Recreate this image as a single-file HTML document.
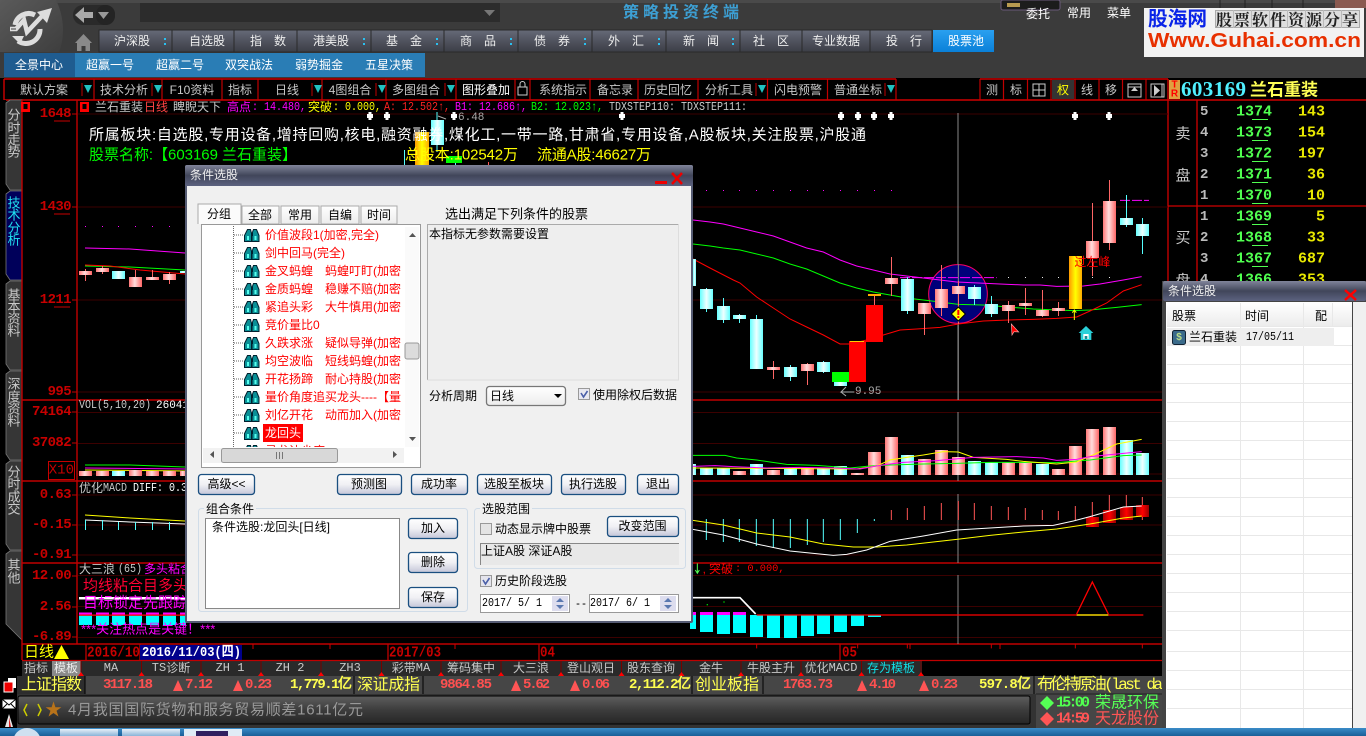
<!DOCTYPE html>
<html lang="zh-CN"><head><meta charset="utf-8"><title>策略投资终端</title>
<style>
html,body{margin:0;padding:0;background:#000;width:1366px;height:736px;overflow:hidden}
svg{display:block}
text{font-family:"Liberation Sans","WenQuanYi Zen Hei","Noto Sans CJK SC",sans-serif;font-size:12px;dominant-baseline:central;white-space:pre}
.m{text-anchor:middle}.e{text-anchor:end}
.n{font-family:"Liberation Mono","WenQuanYi Zen Hei","Noto Sans CJK SC",monospace}
.ax{font-family:"Liberation Mono",monospace;font-weight:bold;font-size:14px;letter-spacing:-.6px;fill:#c80000;text-anchor:end}
.b{font-weight:bold}
.w{fill:#fff}.g{fill:#c8c8c8}.k{fill:#000}.r{fill:#f00}
.dl{stroke:#3c0000;stroke-width:1}
.rl{stroke:#c00000;stroke-width:1.4}
.tt{fill:#ddd;font-size:13px}
.sd{fill:#c8c8c8;font-size:13px;text-anchor:middle}
.f5{fill:#ff5050;font-family:"Liberation Mono",monospace;font-weight:bold;font-size:14px}
.y5{fill:#ffff50;font-family:"Liberation Mono","WenQuanYi Zen Hei",monospace;font-weight:bold;font-size:14px}
.yt{fill:#ffff50;font-size:16px}
.gp{fill:#50ff50;font-family:"Liberation Mono",monospace;font-weight:bold;font-size:15px}
.yq{fill:#e8e800;font-family:"Liberation Mono",monospace;font-weight:bold;font-size:15px;text-anchor:end}
.dg{fill:#bbb;font-family:"Liberation Mono",monospace;font-weight:bold;font-size:14px}
.it{fill:#f00;font-size:12px}
polyline{fill:none}
</style></head><body>
<svg xmlns="http://www.w3.org/2000/svg" width="1366" height="736" viewBox="0 0 1366 736">
<defs>
<linearGradient id="pk"><stop offset="0" stop-color="#f77"/><stop offset=".45" stop-color="#fdd"/><stop offset="1" stop-color="#f66"/></linearGradient>
<linearGradient id="cy"><stop offset="0" stop-color="#6ff"/><stop offset=".5" stop-color="#efffff"/><stop offset="1" stop-color="#6ff"/></linearGradient>
<linearGradient id="ye"><stop offset="0" stop-color="#f90"/><stop offset=".5" stop-color="#ff0"/><stop offset="1" stop-color="#fa0"/></linearGradient>
<linearGradient id="dr"><stop offset="0" stop-color="#a00"/><stop offset=".5" stop-color="#f00"/><stop offset="1" stop-color="#900"/></linearGradient>
<linearGradient id="menu" x2="0" y2="1"><stop offset="0" stop-color="#666a78"/><stop offset=".5" stop-color="#50535e"/><stop offset="1" stop-color="#3c3e46"/></linearGradient>
<linearGradient id="blue" x2="0" y2="1"><stop offset="0" stop-color="#2aa0f0"/><stop offset="1" stop-color="#0a80d8"/></linearGradient>
<linearGradient id="title" x2="0" y2="1"><stop offset="0" stop-color="#80849a"/><stop offset=".5" stop-color="#41465a"/><stop offset="1" stop-color="#5c6280"/></linearGradient>
<linearGradient id="btn" x2="0" y2="1"><stop offset="0" stop-color="#fff"/><stop offset=".5" stop-color="#f0f0f4"/><stop offset="1" stop-color="#c4c6d8"/></linearGradient>
<linearGradient id="news" x2="0" y2="1"><stop offset="0" stop-color="#5e5e5e"/><stop offset=".5" stop-color="#3c3c3c"/><stop offset="1" stop-color="#262626"/></linearGradient>
<linearGradient id="hd" x2="0" y2="1"><stop offset="0" stop-color="#fff"/><stop offset="1" stop-color="#ececec"/></linearGradient>
<linearGradient id="logo" x2="1" y2="1"><stop offset="0" stop-color="#5a5a5a"/><stop offset="1" stop-color="#3e3e3e"/></linearGradient>
<linearGradient id="task" x2="0" y2="1"><stop offset="0" stop-color="#3a8cc8"/><stop offset="1" stop-color="#1a5f98"/></linearGradient>
<linearGradient id="ti" x2="0" y2="1"><stop offset="0" stop-color="#e8f0f8"/><stop offset="1" stop-color="#8ab4d8"/></linearGradient>
<path id="st" d="M-3-2h6v4h-6zM-1.500-4h3v8h-3z" fill="#fff"/>
<g id="bi"><path d="M3.500 1.500h3l1 4v8h-7v-6zM9.500 1.500h3l2.500 6v6h-7v-8z" fill="#0a8f96" stroke="#00202e" stroke-width="1"/><path d="M3 8h2v4H3zM10.500 8h2v4h-2z" fill="#5fe"/><path d="M7 5h2v3H7z" fill="#00202e"/></g>
</defs>

<!-- chrome top -->
<rect width="1366" height="78" fill="#3b3b3b"/>
<rect width="1366" height="3" fill="#4a4a4a"/>
<path d="M0 0H56C63 14 66 34 59 52H0z" fill="url(#logo)"/>
<path d="M15 25A14 14 0 0 1 35 15" fill="none" stroke="#ddd" stroke-width="5"/>
<path d="M40 29A14 14 0 0 1 18 41" fill="none" stroke="#ddd" stroke-width="5"/>
<path d="M10 29H16L24 20 27 32 44 14" fill="none" stroke="#ddd" stroke-width="4.500"/>
<path d="M37 12 52 8 47 23z" fill="#ddd"/>
<path d="M12 36 24 36 20 44z" fill="#ddd"/>
<path d="M11 29H16" stroke="#3e3e3e"/>
<rect x="73" y="5" width="42" height="20" rx="10" fill="#2a2a2a"/>
<rect x="96" y="5" width="19" height="20" rx="9" fill="#242424"/>
<path d="M75 15 84 7v5h9v6h-9v5z" fill="#aaa"/><path d="M98 12h11l-5.500 7z" fill="#999"/>
<rect x="140" y="3" width="360" height="19" fill="#2c2c2c"/>
<path d="M484 10h11l-5.500 6z" fill="#777"/>
<text x="623" y="13" fill="#3d9fd3" class="b" style="font-size:16px;letter-spacing:4px">策略投资终端</text>
<path d="M75 43 83.500 34 92 43h-2v8h-4.500v-5h-4v5H77v-8z" fill="#8a8a8a"/>
<!-- menu -->
<g fill="url(#menu)" stroke="#2a2a2a">
<rect x="99" y="30" width="73" height="22"/><rect x="172" y="30" width="62" height="22"/><rect x="234" y="30" width="63" height="22"/><rect x="297" y="30" width="74" height="22"/><rect x="371" y="30" width="73" height="22"/><rect x="444" y="30" width="74" height="22"/><rect x="518" y="30" width="74" height="22"/><rect x="592" y="30" width="74" height="22"/><rect x="666" y="30" width="74" height="22"/><rect x="740" y="30" width="62" height="22"/><rect x="802" y="30" width="68" height="22"/><rect x="870" y="30" width="62" height="22"/>
</g>
<rect x="933" y="30" width="61" height="22" fill="url(#blue)"/>
<text class="m" x="132" y="41" fill="#eee">沪深股</text><text class="m" x="207" y="41" fill="#eee">自选股</text><text class="m" x="268" y="41" fill="#eee">指　数</text><text class="m" x="331" y="41" fill="#eee">港美股</text><text class="m" x="404" y="41" fill="#eee">基　金</text><text class="m" x="478" y="41" fill="#eee">商　品</text><text class="m" x="552" y="41" fill="#eee">债　券</text><text class="m" x="626" y="41" fill="#eee">外　汇</text><text class="m" x="701" y="41" fill="#eee">新　闻</text><text class="m" x="771" y="41" fill="#eee">社　区</text><text class="m" x="836" y="41" fill="#eee">专业数据</text><text class="m" x="904" y="41" fill="#eee">投　行</text><text class="m" x="966" y="41" fill="#fff">股票池</text>
<g fill="#2ac0f0"><rect x="164" y="38" width="2" height="2"/><rect x="164" y="43" width="2" height="2"/><rect x="363" y="38" width="2" height="2"/><rect x="363" y="43" width="2" height="2"/><rect x="436" y="38" width="2" height="2"/><rect x="436" y="43" width="2" height="2"/><rect x="510" y="38" width="2" height="2"/><rect x="510" y="43" width="2" height="2"/><rect x="584" y="38" width="2" height="2"/><rect x="584" y="43" width="2" height="2"/><rect x="658" y="38" width="2" height="2"/><rect x="658" y="43" width="2" height="2"/><rect x="732" y="38" width="2" height="2"/><rect x="732" y="43" width="2" height="2"/></g>
<!-- blue tabs -->
<rect x="4" y="53" width="421" height="24" fill="#2a7db5"/>
<rect x="4" y="53" width="71" height="24" fill="#1f5c90"/>
<text class="m w" x="39" y="65">全景中心</text><text class="m w" x="110" y="65">超赢一号</text><text class="m w" x="180" y="65">超赢二号</text><text class="m w" x="249" y="65">双突战法</text><text class="m w" x="319" y="65">弱势掘金</text><text class="m w" x="389" y="65">五星决策</text>
<!-- watermark -->
<rect x="1001" y="0" width="59" height="10" rx="2" fill="#1c1c1c" stroke="#6a5a7a"/><rect x="1007" y="3" width="13" height="4" fill="#b89a50"/>
<text class="w" x="1026" y="14">委托</text><text class="w" x="1067" y="13">常用</text><text class="w" x="1107" y="13">菜单</text>
<rect x="1335" y="0" width="31" height="8" fill="#8a5a50"/>
<path d="M1220 0v8M1245 0v8M1272 0v8M1303 0v8" stroke="#222"/>
<rect x="1144" y="8" width="220" height="49" fill="#f2f2f2"/>
<text x="1148" y="19.500" fill="#0a24e8" class="b" style="font-size:20px" textLength="59" lengthAdjust="spacingAndGlyphs">股海网</text>
<rect x="1215.500" y="10.500" width="144" height="17" fill="#dedede" stroke="#aaa"/>
<path d="M1233.500 10v18M1251.500 10v18M1269.500 10v18M1287.500 10v18M1305.500 10v18M1323.500 10v18M1341.500 10v18" stroke="#bbb"/>
<text x="1216" y="19" fill="#222" style="font-family:'Noto Serif CJK SC',serif;font-size:16px;letter-spacing:2px;font-weight:bold">股票软件资源分享</text>
<text x="1148" y="41" fill="#e83000" class="b" style="font-size:20px" textLength="213" lengthAdjust="spacingAndGlyphs">Www.Guhai.com.cn</text>

<!-- toolbar -->
<rect x="0" y="78" width="1366" height="22" fill="#000"/>
<path d="M4 79H896M980 79H1168M1168 79V100M4 79V100M4 100H1366" stroke="#d00000" stroke-width="1.400" fill="none"/>
<path d="M94 79V100M162 79V100M222 79V100M258 79V100M322 79V100M386 79V100M456 79V100M515 79V100M530 79V100M590 79V100M638 79V100M698 79V100M767.500 79V100M827.500 79V100M896 79V100M980 79V100M1003.500 79V100M1027.500 79V100M1051 79V100M1075 79V100M1099 79V100M1122.500 79V100M1146 79V100" stroke="#c00000" stroke-width="1.200" fill="none"/>
<path d="M82 83V96M152 83V96M312 83V96M376 83V96M445 83V96M756 83V96M885 83V96" stroke="#c00000"/>
<path fill="#20c0c0" d="M84 85h8l-4 8zM154 85h8l-4 8zM314 85h8l-4 8zM378 85h8l-4 8zM447 85h8l-4 8zM758 85h8l-4 8zM887 85h8l-4 8z"/>
<rect x="1052" y="80" width="22" height="19" fill="#333"/>
<text class="m" x="44" y="90" fill="#c8c8c8">默认方案</text><text class="m" x="124" y="90" fill="#c8c8c8">技术分析</text><text class="m" x="192" y="90" fill="#c8c8c8">F10资料</text><text class="m" x="240" y="90" fill="#c8c8c8">指标</text><text class="m" x="287" y="90" fill="#c8c8c8">日线</text><text class="m" x="350" y="90" fill="#c8c8c8">4图组合</text><text class="m" x="416" y="90" fill="#c8c8c8">多图组合</text><text class="m w" x="486" y="90">图形叠加</text><text class="m" x="563" y="90" fill="#c8c8c8">系统指示</text><text class="m" x="615" y="90" fill="#c8c8c8">备忘录</text><text class="m" x="668" y="90" fill="#c8c8c8">历史回忆</text><text class="m" x="729" y="90" fill="#c8c8c8">分析工具</text><text class="m" x="798" y="90" fill="#c8c8c8">闪电预警</text><text class="m" x="858" y="90" fill="#c8c8c8">普通坐标</text><text class="m" x="992" y="90" fill="#c8c8c8">测</text><text class="m" x="1016" y="90" fill="#c8c8c8">标</text><text class="m" x="1063" y="90" fill="#ff0">权</text><text class="m" x="1087" y="90" fill="#c8c8c8">线</text><text class="m" x="1111" y="90" fill="#c8c8c8">移</text>
<path d="M520 87V84a2.500 2.500 0 0 1 5 0V87" fill="none" stroke="#ccc"/><rect x="518" y="87" width="9" height="8" fill="none" stroke="#ccc"/>
<rect x="1033" y="84" width="12" height="12" fill="none" stroke="#ccc"/><path d="M1039 84V96M1033 90H1045" stroke="#ccc"/>
<rect x="1128" y="84" width="13" height="13" fill="none" stroke="#ccc"/><path d="M1134.500 87 1131 91h7z" fill="#ccc"/><path d="M1128 87h13" stroke="#ccc"/>
<rect x="1151" y="84" width="13" height="13" fill="none" stroke="#ccc"/><path d="M1154 85v11l6-5.500z" fill="#ccc"/><path d="M1162 84v13" stroke="#ccc"/>

<!-- right quote header -->
<rect x="1169" y="80" width="11" height="19" fill="#e0a040"/>
<text class="m r b" x="1174.500" y="85" style="font-size:10px">T</text><text class="m r b" x="1174.500" y="94" style="font-size:10px">R</text>
<text x="1181" y="89" fill="#50f0ff" class="b" style="font-family:'Liberation Serif',serif;font-size:21px" textLength="65">603169</text>
<text x="1250" y="90" fill="#ff5" class="b" style="font-size:17px">兰石重装</text>
<path d="M1168 100V281M1197 100V281M1168 206H1366" stroke="#d00000" stroke-width="1.300"/>
<text class="m g" x="1183" y="134" style="font-size:15px">卖</text><text class="m g" x="1183" y="176" style="font-size:15px">盘</text><text class="m g" x="1183" y="238" style="font-size:15px">买</text><text class="m g" x="1183" y="281" style="font-size:15px">盘</text>
<text class="dg" x="1200" y="112">5</text><text class="dg" x="1200" y="133">4</text><text class="dg" x="1200" y="154">3</text><text class="dg" x="1200" y="175">2</text><text class="dg" x="1200" y="196">1</text><text class="dg" x="1200" y="217">1</text><text class="dg" x="1200" y="238">2</text><text class="dg" x="1200" y="259">3</text><text class="dg" x="1200" y="280">4</text>
<text class="gp" x="1236" y="112">1374</text><text class="gp" x="1236" y="133">1373</text><text class="gp" x="1236" y="154">1372</text><text class="gp" x="1236" y="175">1371</text><text class="gp" x="1236" y="196">1370</text><text class="gp" x="1236" y="217">1369</text><text class="gp" x="1236" y="238">1368</text><text class="gp" x="1236" y="259">1367</text><text class="gp" x="1236" y="280">1366</text>
<path d="M1252 119.500h16M1252 140.500h16M1252 161.500h16M1252 182.500h16M1252 203.500h16M1252 224.500h16M1252 245.500h16M1252 266.500h16" stroke="#50ff50"/>
<text class="yq" x="1325" y="112">143</text><text class="yq" x="1325" y="133">154</text><text class="yq" x="1325" y="154">197</text><text class="yq" x="1325" y="175">36</text><text class="yq" x="1325" y="196">10</text><text class="yq" x="1325" y="217">5</text><text class="yq" x="1325" y="238">33</text><text class="yq" x="1325" y="259">687</text><text class="yq" x="1325" y="280">353</text>

<!-- left rail -->
<rect x="0" y="100" width="6" height="630" fill="#000"/>
<g fill="#363636" stroke="#777" stroke-width=".8">
<path d="M6 103 10 100H22V190L10 190 6 184z"/>
<path d="M6 284 10 281H22V370L10 370 6 364z"/><path d="M6 374 10 371H22V460L10 460 6 454z"/><path d="M6 464 10 461H22V550L10 550 6 544z"/><path d="M6 554 10 551H22V640L6 624z"/>
</g>
<path d="M6 194 10 191H22V280L10 280 6 274z" fill="#00005a" stroke="#777" stroke-width=".8"/>
<text class="sd" x="14" y="115">分</text><text class="sd" x="14" y="128">时</text><text class="sd" x="14" y="140">走</text><text class="sd" x="14" y="152">势</text>
<text class="sd" x="14" y="203" style="fill:#20e0f0">技</text><text class="sd" x="14" y="215" style="fill:#20e0f0">术</text><text class="sd" x="14" y="228" style="fill:#20e0f0">分</text><text class="sd" x="14" y="240" style="fill:#20e0f0">析</text>
<text class="sd" x="14" y="295">基</text><text class="sd" x="14" y="307">本</text><text class="sd" x="14" y="319">资</text><text class="sd" x="14" y="331">料</text>
<text class="sd" x="14" y="384">深</text><text class="sd" x="14" y="397">度</text><text class="sd" x="14" y="409">资</text><text class="sd" x="14" y="421">料</text>
<text class="sd" x="14" y="472">分</text><text class="sd" x="14" y="484">时</text><text class="sd" x="14" y="497">成</text><text class="sd" x="14" y="509">交</text>
<text class="sd" x="14" y="565">其</text><text class="sd" x="14" y="578">他</text>

<!-- chart frame -->
<path d="M78 114H1168M78 207H1168M78 300H1168M78 392H1163M78 412.500H1163M78 443.500H1163M78 474H1163M78 495H1163M78 525H1163M78 555H1163M78 575.500H1163M78 606.500H1163M78 637.500H1163" class="dl"/>
<path d="M22 100V676M77 100V644M22 400H1163M22 481H1163M22 563H1163M22 644H1163" class="rl" fill="none"/>
<path d="M72 114h5M72 207h5M72 300h5M72 392h5M72 412h5M72 443h5M72 495h5M72 525h5M72 555h5M72 576h5M72 607h5M72 637h5" stroke="#c00000"/>
<text class="ax" x="71" y="114">1648</text><text class="ax" x="71" y="207">1430</text><text class="ax" x="71" y="300">1211</text><text class="ax" x="71" y="392">995</text><text class="ax" x="71" y="412">74164</text><text class="ax" x="71" y="443">37082</text>
<path d="M54 121h16M54 214h16M54 307h16" stroke="#c80000"/>
<rect x="48.500" y="461.500" width="26" height="18" fill="none" stroke="#c80000"/><text class="ax" x="74" y="470.500" style="font-size:14px;font-weight:normal;letter-spacing:0">X10</text>
<text class="ax" x="71" y="495">0.63</text><text class="ax" x="71" y="525">-0.15</text><text class="ax" x="71" y="555">-0.91</text><text class="ax" x="71" y="576">12.00</text><text class="ax" x="71" y="607">2.56</text><text class="ax" x="71" y="637">-6.89</text>
<!-- gear markers -->
<g fill="#f00"><path d="M21 102h9v10h-9z"/><path d="M80 102h9v10h-9z"/></g><rect x="23.500" y="104" width="4" height="5" fill="#000"/><rect x="82.500" y="104" width="4" height="5" fill="#000"/>

<!-- header texts -->
<text x="95" y="107" class="g">兰石重装</text><text x="144" y="107" fill="#f44">日线</text><text x="173" y="107" class="g">睥睨天下</text>
<text x="227" y="107" fill="#f0f">高点</text><text x="252" y="107" class="n" fill="#f0f" textLength="54" lengthAdjust="spacingAndGlyphs">: 14.480,</text>
<text x="308" y="107" fill="#ff0">突破</text><text x="333" y="107" class="n" fill="#ff0" textLength="48" lengthAdjust="spacingAndGlyphs">: 0.000,</text>
<text x="384" y="107" class="n" fill="#f22" textLength="66" lengthAdjust="spacingAndGlyphs">A: 12.502↑,</text>
<text x="455" y="107" class="n" fill="#f0f" textLength="72" lengthAdjust="spacingAndGlyphs">B1: 12.686↑,</text>
<text x="531" y="107" class="n" fill="#0f0" textLength="72" lengthAdjust="spacingAndGlyphs">B2: 12.023↑,</text>
<text x="609" y="107" class="n" fill="#ccc" textLength="138" lengthAdjust="spacingAndGlyphs">TDXSTEP110: TDXSTEP111:</text>

<!-- stars -->
<use href="#st" x="370" y="116"/><use href="#st" x="387" y="116"/><use href="#st" x="454" y="116"/><use href="#st" x="622" y="116"/><use href="#st" x="841" y="116"/><use href="#st" x="858" y="116"/><use href="#st" x="874" y="116"/><use href="#st" x="891" y="116"/><use href="#st" x="1075" y="116"/><use href="#st" x="1109" y="116"/>
<text x="458" y="118" class="n" fill="#aaa" style="font-size:11px">6.48</text><path d="M438 116l8 3" stroke="#aaa"/>
<!-- upper candles above dialog -->
<rect x="404" y="150" width="1" height="16" fill="#5ff"/>
<rect x="415" y="132" width="14" height="34" fill="url(#ye)"/>
<rect x="436.500" y="112" width="1" height="40" fill="#5ff"/><rect x="431" y="120" width="13" height="25" fill="url(#cy)"/>
<rect x="446" y="156" width="16" height="7" fill="#0f0"/><rect x="455" y="163" width="1" height="3" fill="#5ff"/><rect x="488" y="162" width="1" height="4" fill="#f55"/>
<path d="M958 113V400M958 412V481M958 494V563M958 575V644" stroke="#888" fill="none"/>
<text x="89" y="135" class="w" style="font-size:15px" textLength="777">所属板块:自选股,专用设备,增持回购,核电,融资融券,煤化工,一带一路,甘肃省,专用设备,A股板块,关注股票,沪股通</text>
<text x="89" y="155" fill="#0f0" style="font-size:15px" textLength="208">股票名称:【603169 兰石重装】</text>
<text x="405" y="155" fill="#ff0" style="font-size:15px" textLength="113">总股本:102542万</text><text x="537" y="155" fill="#ff0" style="font-size:15px" textLength="114">流通A股:46627万</text>

<!-- left chart parts -->
<g fill="#f0f"><rect x="85" y="226" width="1" height="1"/><rect x="102" y="226" width="1" height="1"/><rect x="118" y="226" width="1" height="1"/><rect x="135" y="226" width="1" height="1"/><rect x="152" y="226" width="1" height="1"/><rect x="169" y="226" width="1" height="1"/></g>
<polyline points="85,248 130,249 185,253" stroke="#f0f"/><polyline points="85,266 130,267 185,270" stroke="#0f0"/><polyline points="85,265 110,266 140,270 185,274" stroke="#f00"/>
<g fill="#f66"><rect x="85" y="269" width="1" height="12"/><rect x="102" y="266" width="1" height="8"/><rect x="135" y="270" width="1" height="10"/><rect x="152" y="270" width="1" height="10"/><rect x="169" y="272" width="1" height="12"/></g>
<rect x="79" y="271" width="13" height="4" fill="url(#pk)"/><rect x="96" y="268" width="13" height="4" fill="url(#pk)"/><rect x="112" y="271" width="13" height="8" fill="url(#cy)"/><rect x="129" y="277" width="13" height="10" fill="url(#pk)"/><rect x="146" y="277" width="13" height="3" fill="url(#pk)"/><rect x="163" y="274" width="13" height="6" fill="url(#pk)"/><rect x="180" y="271" width="6" height="2" fill="url(#cy)"/>
<text x="79" y="405" class="n" fill="#ccc" textLength="72" lengthAdjust="spacingAndGlyphs">VOL(5,10,20)</text><text x="156" y="406" class="n w" style="font-size:11px">26041</text>
<polyline points="85,465 130,465 185,467" stroke="#0f0"/><polyline points="85,468 185,469" stroke="#f0f"/><polyline points="85,470 185,471" stroke="#ff0"/>
<rect x="79" y="471" width="13" height="5" fill="url(#pk)"/><rect x="96" y="471" width="13" height="5" fill="url(#pk)"/><rect x="112" y="471" width="13" height="5" fill="url(#cy)"/><rect x="129" y="470" width="13" height="6" fill="url(#pk)"/><rect x="146" y="471" width="13" height="5" fill="url(#pk)"/><rect x="163" y="471" width="13" height="5" fill="url(#pk)"/><rect x="180" y="471" width="6" height="5" fill="url(#pk)"/>
<text x="79" y="488" class="g">优化</text><text x="103" y="488" class="n g" textLength="24" lengthAdjust="spacingAndGlyphs">MACD</text><text x="133" y="488" class="n w" textLength="54" lengthAdjust="spacingAndGlyphs">DIFF: 0.3</text>
<polyline points="85,515 130,518 185,521" stroke="#ff0"/><polyline points="85,520 130,522 185,524" stroke="#fff"/>
<path d="M85.500 520v10M102.500 520v10M118.500 522v8M135.500 522v8M152.500 522v8M169.500 522v8" stroke="#5ff"/>
<text x="79" y="569" class="g">大三浪</text><text x="118" y="569" class="n g" textLength="24" lengthAdjust="spacingAndGlyphs">(65)</text><text x="144" y="569" fill="#f0f">多头粘合</text>
<text x="83" y="586" fill="#f03" style="font-size:15px">均线粘合目多头</text>
<rect x="79" y="597" width="107" height="2.500" fill="#fff"/>
<text x="83" y="603" fill="#f0f" style="font-size:15px">目标锁定先跟踪</text>
<g fill="#0ff"><rect x="79" y="614" width="13" height="11"/><rect x="96" y="614" width="13" height="11"/><rect x="112" y="614" width="13" height="11"/><rect x="129" y="614" width="13" height="11"/><rect x="146" y="614" width="13" height="11"/><rect x="163" y="614" width="13" height="11"/><rect x="180" y="614" width="6" height="11"/></g>
<g fill="#f0f"><rect x="79" y="612.500" width="13" height="3"/><rect x="96" y="612.500" width="13" height="3"/><rect x="112" y="612.500" width="13" height="3"/><rect x="129" y="612.500" width="13" height="3"/><rect x="146" y="612.500" width="13" height="3"/><rect x="163" y="612.500" width="13" height="3"/><rect x="180" y="612.500" width="6" height="3"/></g>
<rect x="79" y="614.500" width="107" height="1.300" fill="#f00"/>
<text x="81" y="629" fill="#f0f" style="font-size:13px">***关注热点是关键！***</text>

<!-- main chart zoom coords -->
<g transform="translate(690,170) scale(.33333)">
<g fill="#f0f"><rect x="48" y="60" width="3" height="3"/><rect x="99" y="60" width="3" height="3"/><rect x="147" y="60" width="3" height="3"/><rect x="198" y="60" width="3" height="3"/><rect x="249" y="60" width="3" height="3"/><rect x="300" y="60" width="3" height="3"/><rect x="351" y="60" width="3" height="3"/><rect x="399" y="60" width="3" height="3"/><rect x="450" y="60" width="3" height="3"/><rect x="501" y="60" width="3" height="3"/><rect x="552" y="60" width="3" height="3"/><rect x="603" y="60" width="3" height="3"/></g>
<g fill="#eee"><rect x="954" y="321" width="3" height="3"/><rect x="1005" y="321" width="3" height="3"/><rect x="1056" y="321" width="3" height="3"/><rect x="1104" y="321" width="3" height="3"/><rect x="1155" y="321" width="3" height="3"/><rect x="1206" y="321" width="3" height="3"/><rect x="1257" y="321" width="3" height="3"/></g>
<circle cx="804" cy="372" r="88" fill="#00007a" stroke="#f06" stroke-width="3"/>
<path d="M805 282V690" stroke="#888" stroke-width="3"/>
<polyline stroke-width="3" stroke="#f0f" points="9,150 60,156 100,162 150,174 200,186 250,198 300,216 350,234 400,246 450,270 500,288 550,300 600,312 650,318 700,324 750,330 800,336 930,342 1000,345 1050,345 1100,349 1180,348 1230,342 1300,330 1355,320"/>
<polyline stroke-width="3" stroke="#0f0" points="9,222 60,228 100,234 150,240 200,252 250,264 300,282 350,297 400,318 450,339 500,354 550,366 600,375 650,384 700,390 750,396 805,403 880,405 955,411 1030,417 1100,420 1150,422 1200,420 1280,412 1355,404"/>
<polyline stroke-width="3" stroke="#f00" points="9,267 60,294 130,330 150,339 200,381 250,414 300,447 350,471 400,495 450,522 480,522 530,510 580,495 630,480 680,477 750,472 805,462 880,453 955,450 1030,448 1100,445 1160,441 1200,423 1250,399 1300,363 1355,344"/>
<path d="M630 323H920M1290 91h87" stroke="#f0f" stroke-width="3" stroke-dasharray="30 6"/>
<g fill="#f66"><rect x="249" y="573" width="3" height="54"/><rect x="351" y="579" width="3" height="66"/><rect x="603" y="261" width="3" height="117"/><rect x="702" y="399" width="3" height="96"/><rect x="753" y="285" width="3" height="153"/><rect x="804" y="333" width="3" height="129"/><rect x="954" y="393" width="3" height="66"/><rect x="1005" y="354" width="3" height="81"/><rect x="1056" y="360" width="3" height="81"/><rect x="1104" y="396" width="3" height="42"/><rect x="1206" y="99" width="3" height="219"/><rect x="1257" y="30" width="3" height="210"/><rect x="552" y="378" width="3" height="27"/></g>
<g fill="#5ff"><rect x="48" y="354" width="3" height="72"/><rect x="99" y="384" width="3" height="75"/><rect x="147" y="432" width="3" height="27"/><rect x="198" y="435" width="3" height="15"/><rect x="300" y="585" width="3" height="48"/><rect x="399" y="573" width="3" height="36"/><rect x="651" y="321" width="3" height="111"/><rect x="852" y="345" width="3" height="60"/><rect x="903" y="378" width="3" height="63"/><rect x="1308" y="75" width="3" height="96"/><rect x="1356" y="144" width="3" height="108"/></g>
<g fill="url(#cy)"><rect x="9" y="267" width="9" height="81"/><rect x="30" y="357" width="39" height="60"/><rect x="81" y="408" width="39" height="42"/><rect x="129" y="435" width="39" height="12"/><rect x="180" y="447" width="39" height="150"/><rect x="282" y="591" width="39" height="30"/><rect x="381" y="576" width="39" height="30"/><rect x="432" y="636" width="39" height="12"/><rect x="633" y="327" width="39" height="96"/><rect x="834" y="351" width="39" height="36"/><rect x="885" y="402" width="39" height="30"/><rect x="1290" y="144" width="39" height="21"/><rect x="1338" y="162" width="39" height="36"/></g>
<g fill="url(#pk)"><rect x="231" y="591" width="39" height="9"/><rect x="333" y="582" width="39" height="21"/><rect x="585" y="324" width="39" height="18"/><rect x="684" y="399" width="39" height="33"/><rect x="735" y="357" width="39" height="57"/><rect x="786" y="348" width="39" height="24"/><rect x="936" y="405" width="39" height="18"/><rect x="987" y="399" width="39" height="9"/><rect x="1038" y="420" width="39" height="18"/><rect x="1086" y="414" width="39" height="9"/><rect x="1188" y="213" width="39" height="51"/><rect x="1239" y="93" width="39" height="126"/></g>
<rect x="426" y="606" width="51" height="30" fill="#0f0"/><rect x="477" y="513" width="51" height="123" fill="#f00"/><rect x="528" y="405" width="51" height="111" fill="#f00"/>
<rect x="480" y="513" width="42" height="3" fill="#fc0"/><rect x="534" y="372" width="39" height="6" fill="#fa0"/>
<rect x="1137" y="258" width="39" height="159" fill="url(#ye)"/>
<path d="M1153 420v30M1147 428l6-8 6 8" stroke="#ff0" stroke-width="3" fill="none"/>
<path d="M805 411 826 432 805 453 784 432z" fill="#ff0" stroke="#000" stroke-width="3"/><rect x="802" y="420" width="6" height="15" fill="#f00"/><rect x="802" y="438" width="6" height="6" fill="#f00"/>
<text x="1153" y="276" fill="#f00" style="font-size:36px" textLength="108">过左峰</text>
<text x="495" y="666" fill="#aaa" class="n" style="font-size:33px">9.95</text><path d="M493 666H453l15-15M453 666l15 12" stroke="#aaa" stroke-width="3" fill="none"/>
<path d="M964 462 986 486 972 485 966 495z" fill="#f00" stroke="#faa" stroke-width="2"/>
<path d="M1188 468 1210 489h-6v21h-32v-21h-6z" fill="#2ad0d8"/><path d="M1180 492h16v15h-16z" fill="#fff"/><path d="M1184 498h8v9h-8z" fill="#1a8a90"/>
</g>
<!-- lower chart zoom coords -->
<g transform="translate(690,400) scale(.33333)">
<g fill="url(#cy)"><rect x="0" y="192" width="18" height="33"/><rect x="30" y="204" width="39" height="21"/><rect x="81" y="204" width="39" height="21"/><rect x="180" y="192" width="39" height="33"/><rect x="282" y="204" width="39" height="21"/><rect x="381" y="204" width="39" height="21"/><rect x="432" y="198" width="39" height="27"/><rect x="633" y="165" width="39" height="60"/><rect x="834" y="183" width="39" height="42"/><rect x="885" y="186" width="39" height="39"/><rect x="1038" y="192" width="39" height="33"/><rect x="1290" y="120" width="39" height="105"/><rect x="1338" y="159" width="39" height="66"/></g>
<g fill="url(#pk)"><rect x="129" y="213" width="39" height="12"/><rect x="231" y="210" width="39" height="15"/><rect x="333" y="204" width="39" height="21"/><rect x="483" y="219" width="39" height="6"/><rect x="534" y="156" width="39" height="69"/><rect x="585" y="111" width="39" height="114"/><rect x="684" y="177" width="39" height="48"/><rect x="735" y="150" width="39" height="75"/><rect x="786" y="171" width="39" height="54"/><rect x="936" y="186" width="39" height="39"/><rect x="987" y="186" width="39" height="39"/><rect x="1086" y="207" width="39" height="18"/><rect x="1137" y="138" width="39" height="87"/><rect x="1188" y="87" width="39" height="138"/><rect x="1239" y="81" width="39" height="144"/></g>
<polyline stroke-width="3" stroke="#0f0" points="9,166 105,166 140,174 200,180 240,186 290,193 380,196 430,200 480,204 540,198 600,195 700,192 800,190 900,187 1000,187 1100,188 1200,180 1300,167 1355,165"/>
<polyline stroke-width="3" stroke="#ff0" points="9,204 500,207 560,198 600,180 650,172 700,165 760,155 805,156 850,172 950,178 1000,184 1100,192 1160,186 1220,160 1280,132 1355,118"/>
<polyline stroke-width="3" stroke="#f0f" points="9,199 75,197 130,200 230,204 330,202 430,204 510,207 570,196 640,187 740,182 850,172 980,170 1060,174 1100,181 1160,178 1200,170 1300,160 1355,155"/>
<!-- macd -->
<g fill="none" stroke-width="3">
<path stroke="#5ff" d="M49 357V420M100 357V426M148 357V426M199 357V438M250 357V444M301 357V444M352 357V435M400 357V426M451 357V420M502 357V399M553 357V363"/>
<path stroke="#f55" d="M604 330V360M652 324V360M703 318V360M754 309V360M805 303V360M853 309V360M904 318V360M955 321V360M1006 324V360M1057 330V360M1105 333V360M1156 318V360M1207 306V360M1258 285V360M1309 285V360M1357 291V360"/>
</g>
<g fill="url(#dr)"><rect x="1188" y="351" width="39" height="30"/><rect x="1239" y="330" width="39" height="39"/><rect x="1290" y="321" width="39" height="39"/><rect x="1338" y="315" width="39" height="36"/></g>
<polyline stroke-width="3" stroke="#ff0" points="9,361 100,375 200,399 300,411 400,432 490,441 560,441 650,435 800,418 900,406 1000,396 1100,387 1200,372 1300,354 1355,348"/>
<polyline stroke-width="3" stroke="#fff" points="9,388 100,405 200,432 300,453 400,463 430,466 470,463 530,450 600,424 700,408 800,390 900,384 1000,378 1090,376 1150,363 1200,350 1300,321 1355,318"/>
<!-- third -->
<text x="38" y="507" fill="#f00" style="font-size:36px">,</text><path d="M22 490V520M16 510l6 10 6-10" stroke="#5f5" stroke-width="3" fill="none"/>
<text x="57" y="507" fill="#f00" style="font-size:36px">突破</text><text x="135" y="507" fill="#f00" class="n" style="font-size:31px">: 0.000,</text>
<g fill="#f0f"><rect x="0" y="636" width="18" height="9"/><rect x="30" y="636" width="39" height="9"/><rect x="81" y="636" width="39" height="9"/><rect x="129" y="636" width="39" height="9"/></g>
<g fill="#0ff"><rect x="0" y="645" width="18" height="42"/><rect x="30" y="645" width="39" height="51"/><rect x="81" y="645" width="39" height="57"/><rect x="129" y="645" width="39" height="54"/><rect x="180" y="645" width="39" height="66"/><rect x="231" y="645" width="39" height="69"/><rect x="282" y="645" width="39" height="69"/><rect x="333" y="645" width="39" height="63"/><rect x="381" y="645" width="39" height="57"/><rect x="432" y="645" width="39" height="51"/><rect x="483" y="645" width="39" height="33"/><rect x="534" y="645" width="39" height="6"/></g>
<path d="M0 593H150L197 642" fill="none" stroke="#fff" stroke-width="5"/>
<rect x="50" y="612" width="4" height="4" fill="#0c0"/><rect x="100" y="604" width="4" height="4" fill="#0c0"/>
<path d="M200 645H1360" stroke="#f00" stroke-width="4"/>
<path d="M1160 642 1207 546 1255 642" fill="none" stroke="#f00" stroke-width="4"/>
<path d="M1160 645H1255" stroke="#ff0" stroke-width="4"/>
<path d="M200 733v12M503 733v12M652 733v12M904 733v12M1156 733v12M1357 733v12" stroke="#c00" stroke-width="3"/>
</g>

<!-- x axis -->
<text x="24" y="652" fill="#ff0" style="font-size:15px">日线</text><path d="M54 659 61.500 645 69 659z" fill="#ff0"/>
<path d="M86 644V660M140 644V660M388 644V660M539 644V660M840 644V660" stroke="#c00000" stroke-width="1.300"/>
<path d="M253 644v5M330 644v5M455 644v5M910 644v5M1000 644v5" stroke="#c00"/>
<text x="87" y="653" class="n b" fill="#c80000" style="font-size:15px" textLength="53" lengthAdjust="spacingAndGlyphs">2016/10</text>
<rect x="140" y="645" width="102" height="15" fill="#00008c"/><text x="142" y="653" fill="#fff" class="n b" style="font-size:14px" textLength="99" lengthAdjust="spacingAndGlyphs">2016/11/03(四)</text>
<text x="389" y="653" class="n b" fill="#c80000" style="font-size:15px" textLength="52" lengthAdjust="spacingAndGlyphs">2017/03</text><text x="540" y="653" class="n b" fill="#c80000" style="font-size:15px" textLength="15" lengthAdjust="spacingAndGlyphs">04</text><text x="842" y="653" class="n b" fill="#c80000" style="font-size:15px" textLength="15" lengthAdjust="spacingAndGlyphs">05</text>
<!-- template row -->
<rect x="0" y="660" width="1163" height="16" fill="#000"/>
<rect x="22" y="661" width="900" height="15" fill="#2a2a2a"/>
<path d="M22 660.500H1163" stroke="#c00000" stroke-width="1.300"/>
<rect x="52" y="661" width="29" height="15" fill="#8a8a8a"/>
<path d="M81 661V676M141.500 661V676M201 661V676M261 661V676M321 661V676M381.500 661V676M441 661V676M501 661V676M561 661V676M621.500 661V676M681.500 661V676M741 661V676M801 661V676M861.500 661V676M921 661V676" stroke="#700"/>
<path d="M78 676l3-4 3 4zM138.500 676l3-4 3 4zM198 676l3-4 3 4zM258 676l3-4 3 4zM318 676l3-4 3 4zM378.500 676l3-4 3 4zM438 676l3-4 3 4zM498 676l3-4 3 4zM558 676l3-4 3 4zM618.500 676l3-4 3 4zM678.500 676l3-4 3 4zM738 676l3-4 3 4zM798 676l3-4 3 4zM858.500 676l3-4 3 4zM918 676l3-4 3 4z" fill="#f00"/>
<text x="24" y="668" class="g">指标</text><text x="54" y="668" fill="#eee">模板</text><text class="m n g" x="111" y="668">MA</text><text class="m g" x="171" y="668"><tspan class="n">TS</tspan>诊断</text><text class="m n g" x="230" y="668">ZH 1</text><text class="m n g" x="290" y="668">ZH 2</text><text class="m n g" x="350" y="668">ZH3</text><text class="m g" x="411" y="668">彩带<tspan class="n">MA</tspan></text><text class="m g" x="471" y="668">筹码集中</text><text class="m g" x="531" y="668">大三浪</text><text class="m g" x="591" y="668">登山观日</text><text class="m g" x="651" y="668">股东查询</text><text class="m g" x="711" y="668">金牛</text><text class="m g" x="771" y="668">牛股主升</text><text class="m g" x="831" y="668">优化<tspan class="n">MACD</tspan></text><text class="m" x="891" y="668" fill="#10e0e8">存为模板</text>
<!-- ticker -->
<rect x="17" y="676" width="1146" height="18" fill="#464646"/>
<rect x="0" y="676" width="17" height="54" fill="#000"/>
<rect x="1036" y="676" width="127" height="52" fill="#464646"/>
<path d="M85 676V694M354 676V694M423 676V694M692 676V694M763 676V694M1034 676V694" stroke="#000"/>
<rect x="17" y="676" width="68" height="18" fill="#000" opacity=".35"/>
<text x="21" y="685" class="yt" textLength="61">上证指数</text>
<text x="103" y="685" class="f5" textLength="50">3117.18</text><path d="M173 691 178 680 183 691z" fill="#f55"/><text x="185" y="685" class="f5" textLength="28">7.12</text><path d="M233 691 238 680 243 691z" fill="#f55"/><text x="245" y="685" class="f5" textLength="27">0.23</text>
<text x="290" y="685" class="y5" textLength="62">1,779.1亿</text>
<text x="357" y="685" class="yt" textLength="63">深证成指</text>
<text x="440" y="685" class="f5" textLength="52">9864.85</text><path d="M511 691 516 680 521 691z" fill="#f55"/><text x="523" y="685" class="f5" textLength="27">5.62</text><path d="M570 691 575 680 580 691z" fill="#f55"/><text x="582" y="685" class="f5" textLength="28">0.06</text>
<text x="629" y="685" class="y5" textLength="62">2,112.2亿</text>
<text x="695" y="685" class="yt" textLength="64">创业板指</text>
<text x="783" y="685" class="f5" textLength="50">1763.73</text><path d="M857 691 862 680 867 691z" fill="#f55"/><text x="869" y="685" class="f5" textLength="27">4.10</text><path d="M919 691 924 680 929 691z" fill="#f55"/><text x="931" y="685" class="f5" textLength="27">0.23</text>
<text x="979" y="685" class="y5" textLength="52">597.8亿</text>
<text x="1037" y="685" class="y5" style="font-size:16px;font-weight:normal" textLength="126">布伦特原油(last da</text>
<!-- side icons -->
<rect x="8" y="678" width="8" height="10" fill="#fff"/><rect x="4" y="682" width="9" height="10" fill="#e00" stroke="#fff"/>
<rect x="2" y="699" width="14" height="10" fill="#fff" stroke="#000"/><path d="M2 699 9 705 16 699M2 709 7 704M16 709 11 704" fill="none" stroke="#000"/>
<path d="M9 714 13 727H5z" fill="#e8e8e8"/><path d="M9 717 11 727H9z" fill="#d22"/>
<!-- news -->
<rect x="17" y="694" width="1019" height="34" fill="#333"/>
<rect x="18" y="696" width="1012" height="28" rx="2" fill="url(#news)" stroke="#000"/>
<path d="M27 704 24 710 27 716M38 704 41 710 38 716" fill="none" stroke="#cc0" stroke-width="1.500"/>
<text x="45" y="710" fill="#b8731a" style="font-size:17px">★</text>
<text x="68" y="710" fill="#999" style="font-size:15px" textLength="295">4月我国国际货物和服务贸易顺差1611亿元</text>
<path d="M1036 694H1163" stroke="#222"/>
<path d="M1047 696 1054 703 1047 710 1040 703z" fill="#5f5"/><text x="1056" y="703" class="gp" textLength="34">15:00</text><text x="1095" y="703" fill="#5f5" style="font-size:16px">荣晟环保</text>
<path d="M1047 712 1054 719 1047 726 1040 719z" fill="#f55"/><text x="1056" y="719" class="gp" style="fill:#f55" textLength="34">14:59</text><text x="1095" y="719" fill="#f55" style="font-size:16px">天龙股份</text>
<!-- taskbar -->
<rect x="0" y="728" width="1366" height="8" fill="url(#task)"/>
<circle cx="27" cy="742" r="14" fill="#cfe0f0"/>
<rect x="60" y="729" width="58" height="7" fill="url(#ti)"/><rect x="122" y="729" width="58" height="7" fill="url(#ti)"/><rect x="184" y="729" width="58" height="7" fill="#e0ecf6"/><rect x="196" y="731" width="32" height="5" fill="#302060"/>

<!-- selector panel right -->
<rect x="1162" y="281" width="204" height="447" fill="#444"/>
<rect x="1163" y="281" width="203" height="20" rx="2" fill="url(#title)"/>
<text x="1168" y="291" fill="#eee" style="font-size:12px">条件选股</text>
<path d="M1345 290 1356 300M1356 290 1345 300" stroke="#f00" stroke-width="2.500"/>
<rect x="1166" y="302" width="186" height="426" fill="#fff"/>
<rect x="1353" y="302" width="13" height="426" fill="#f0f0f0"/>
<rect x="1167" y="303" width="185" height="23" fill="url(#hd)"/>
<path d="M1167 326.500H1352M1167 345.500H1352M1167 364.500H1352M1167 383.500H1352M1167 402.500H1352M1167 421.500H1352M1167 440.500H1352M1167 459.500H1352M1167 478.500H1352M1167 497.500H1352M1167 516.500H1352M1167 535.500H1352M1167 554.500H1352M1167 573.500H1352M1167 592.500H1352M1167 611.500H1352M1167 630.500H1352M1167 651.500H1352M1167 670.500H1352M1167 689.500H1352M1167 708.500H1352M1240.500 303V728M1303.500 303V728M1332.500 303V326" stroke="#e8e8e8"/>
<rect x="1167" y="328" width="167" height="18" fill="#eee"/>
<text x="1172" y="316" class="k">股票</text><text x="1245" y="316" class="k">时间</text><text x="1315" y="316" class="k">配</text>
<rect x="1172.500" y="330.500" width="13" height="14" rx="2" fill="#3a6a8a" stroke="#123"/><text class="m b" x="1179" y="337.500" fill="#bd8" style="font-size:10px">$</text>
<text x="1189" y="337" class="k">兰石重装</text><text x="1246" y="337" class="n k" textLength="48" lengthAdjust="spacingAndGlyphs">17/05/11</text>

<!-- dialog -->
<rect x="185" y="165" width="508" height="458" rx="2" fill="#565c74"/>
<rect x="185" y="165" width="508" height="21" rx="2" fill="url(#title)"/>
<rect x="187" y="186" width="504" height="435" fill="#f0f0f0"/>
<text x="190" y="175" fill="#eee" style="font-size:12px">条件选股</text>
<rect x="655" y="181" width="12" height="3" fill="#e00"/>
<path d="M672 173 682 184M682 173 672 184" stroke="#e00" stroke-width="2.500"/>
<!-- tabs -->
<path d="M198 224V204H241V224" fill="#fbfbfb" stroke="#aaa"/>
<g fill="url(#hd)" stroke="#aaa"><rect x="242" y="206" width="37" height="18"/><rect x="281" y="206" width="38" height="18"/><rect x="321" y="206" width="38" height="18"/><rect x="361" y="206" width="36" height="18"/></g>
<text class="m k" x="219" y="214">分组</text><text class="m k" x="260" y="215">全部</text><text class="m k" x="300" y="215">常用</text><text class="m k" x="340" y="215">自编</text><text class="m k" x="379" y="215">时间</text>
<rect x="201.500" y="224.500" width="219" height="243" fill="#fff" stroke="#999"/>
<!-- tree -->
<path d="M233.500 226V447" stroke="#666" stroke-dasharray="1 1"/>
<path d="M234 235h10M234 253h10M234 271h10M234 289h10M234 307h10M234 325h10M234 343h10M234 361h10M234 379h10M234 397h10M234 415h10M234 433h10" stroke="#666" stroke-dasharray="1 1"/>
<use href="#bi" x="244" y="228"/><use href="#bi" x="244" y="246"/><use href="#bi" x="244" y="264"/><use href="#bi" x="244" y="282"/><use href="#bi" x="244" y="300"/><use href="#bi" x="244" y="318"/><use href="#bi" x="244" y="336"/><use href="#bi" x="244" y="354"/><use href="#bi" x="244" y="372"/><use href="#bi" x="244" y="390"/><use href="#bi" x="244" y="408"/><use href="#bi" x="244" y="426"/><use href="#bi" x="244" y="444"/>
<text class="it" x="265" y="235">价值波段1(加密,完全)</text>
<text class="it" x="265" y="253">剑中回马(完全)</text>
<text class="it" x="265" y="271">金叉蚂蝗</text><text class="it" x="325" y="271">蚂蝗叮盯(加密</text>
<text class="it" x="265" y="289">金质蚂蝗</text><text class="it" x="325" y="289">稳赚不赔(加密</text>
<text class="it" x="265" y="307">紧追头彩</text><text class="it" x="325" y="307">大牛慎用(加密</text>
<text class="it" x="265" y="325">竞价量比0</text>
<text class="it" x="265" y="343">久跌求涨</text><text class="it" x="325" y="343">疑似导弹(加密</text>
<text class="it" x="265" y="361">均空波临</text><text class="it" x="325" y="361">短线蚂蝗(加密</text>
<text class="it" x="265" y="379">开花扬蹄</text><text class="it" x="325" y="379">耐心持股(加密</text>
<text class="it" x="265" y="397">量价角度追买龙头----【量</text>
<text class="it" x="265" y="415">刘亿开花</text><text class="it" x="325" y="415">动而加入(加密</text>
<rect x="263" y="424" width="40" height="18" fill="#f00"/><text class="w" x="265" y="433">龙回头</text>
<text class="it" x="265" y="451">寻龙诀尖底</text>
<rect x="403" y="226" width="17" height="240" fill="#fff"/>
<rect x="405" y="227" width="14" height="220" fill="#fafafa"/>
<path d="M409 237h7l-3.500-4zM409 437h7l-3.500 4z" fill="#555"/>
<rect x="405" y="343" width="14" height="16" rx="2" fill="#dcdcdc" stroke="#999"/>
<rect x="202" y="447" width="218" height="20" fill="#fff"/>
<rect x="203" y="448" width="201" height="15" fill="#f2f2f2"/>
<path d="M214 451v7l-4-3.500zM393 451v7l4-3.500z" fill="#555"/>
<rect x="221.500" y="448.500" width="116" height="14" rx="2" fill="#d8d8d8" stroke="#999"/>
<path d="M276.500 452v7M279.500 452v7M282.500 452v7" stroke="#777"/>
<!-- right -->
<text x="445" y="214" class="k" style="font-size:13px">选出满足下列条件的股票</text>
<rect x="427.500" y="224.500" width="251" height="155" fill="#eee"/><path d="M427.500 380V224.500H678.500" fill="none" stroke="#aaa"/><path d="M678.500 224.500V380H427.500" fill="none" stroke="#ddd"/>
<text x="429" y="234" class="k">本指标无参数需要设置</text>
<text x="429" y="396" class="k">分析周期</text>
<rect x="486.500" y="386.500" width="79" height="19" rx="3" fill="url(#hd)" stroke="#777" stroke-width="1.300"/>
<text x="490" y="396" class="k">日线</text><path d="M554 394h8l-4 4z" fill="#000"/>
<rect x="578.500" y="388.500" width="11" height="11" fill="#e8e8f0" stroke="#999"/><path d="M581 393l2.500 4 4-6" fill="none" stroke="#4a5fa8" stroke-width="1.600"/>
<text x="593" y="395" class="k" textLength="84">使用除权后数据</text>
<!-- buttons -->
<g fill="url(#btn)" stroke="#1a4f80" stroke-width="1.300">
<rect x="198.500" y="474.500" width="56" height="20" rx="3"/><rect x="337.500" y="474.500" width="64" height="20" rx="3"/><rect x="411.500" y="474.500" width="56" height="20" rx="3"/><rect x="477.500" y="474.500" width="74" height="20" rx="3"/><rect x="561.500" y="474.500" width="64" height="20" rx="3"/><rect x="637.500" y="474.500" width="41" height="20" rx="3"/>
<rect x="408.500" y="518.500" width="49" height="20" rx="3"/><rect x="408.500" y="552.500" width="49" height="20" rx="3"/><rect x="408.500" y="587.500" width="49" height="20" rx="3"/><rect x="607.500" y="516.500" width="71" height="20" rx="3"/>
</g>
<text class="m k" x="226.500" y="484">高级&lt;&lt;</text><text class="m k" x="369" y="484">预测图</text><text class="m k" x="439" y="484">成功率</text><text class="m k" x="514" y="484">选股至板块</text><text class="m k" x="593" y="484">执行选股</text><text class="m k" x="658" y="484">退出</text>
<text class="m k" x="433" y="528">加入</text><text class="m k" x="433" y="562">删除</text><text class="m k" x="433" y="597">保存</text><text class="m k" x="642.500" y="526">改变范围</text>
<!-- groups -->
<rect x="198.500" y="508.500" width="269" height="103" rx="3" fill="none" stroke="#d0dce8"/>
<rect x="204" y="504" width="52" height="10" fill="#f0f0f0"/><text x="206" y="509" class="k">组合条件</text>
<rect x="205.500" y="518.500" width="194" height="90" fill="#fff" stroke="#888"/>
<text x="212" y="527" class="k">条件选股:龙回头[日线]</text>
<rect x="474.500" y="508.500" width="211" height="60" rx="3" fill="none" stroke="#d0dce8"/>
<rect x="480" y="504" width="52" height="10" fill="#f0f0f0"/><text x="482" y="509" class="k">选股范围</text>
<rect x="480.500" y="523.500" width="11" height="11" fill="#e4e4e4" stroke="#999"/>
<text x="495" y="529" class="k">动态显示牌中股票</text>
<rect x="480" y="543" width="199" height="22" fill="#e8e8e8"/><path d="M480.500 565V543.500H679" fill="none" stroke="#888"/>
<text x="481" y="551" class="k">上证A股 深证A股</text>
<rect x="480.500" y="575.500" width="11" height="11" fill="#e4e4ec" stroke="#999"/><path d="M483 580l2.500 4 4-6" fill="none" stroke="#4a5fa8" stroke-width="1.600"/>
<text x="495" y="581" class="k">历史阶段选股</text>
<rect x="480.500" y="594.500" width="89" height="18" fill="#fff" stroke="#999"/><rect x="589.500" y="594.500" width="89" height="18" fill="#fff" stroke="#999"/>
<text x="482" y="603" class="n k" textLength="60" lengthAdjust="spacingAndGlyphs">2017/ 5/ 1</text><text x="575" y="604" class="n k" textLength="12" lengthAdjust="spacingAndGlyphs">--</text><text x="590" y="603" class="n k" textLength="60" lengthAdjust="spacingAndGlyphs">2017/ 6/ 1</text>
<rect x="552" y="596" width="16" height="15" fill="#dde"/><rect x="660" y="596" width="16" height="15" fill="#dde"/>
<path d="M556 602h8l-4-4zM556 605h8l-4 4zM664 602h8l-4-4zM664 605h8l-4 4z" fill="#5a78b0"/>
</svg>
</body></html>
